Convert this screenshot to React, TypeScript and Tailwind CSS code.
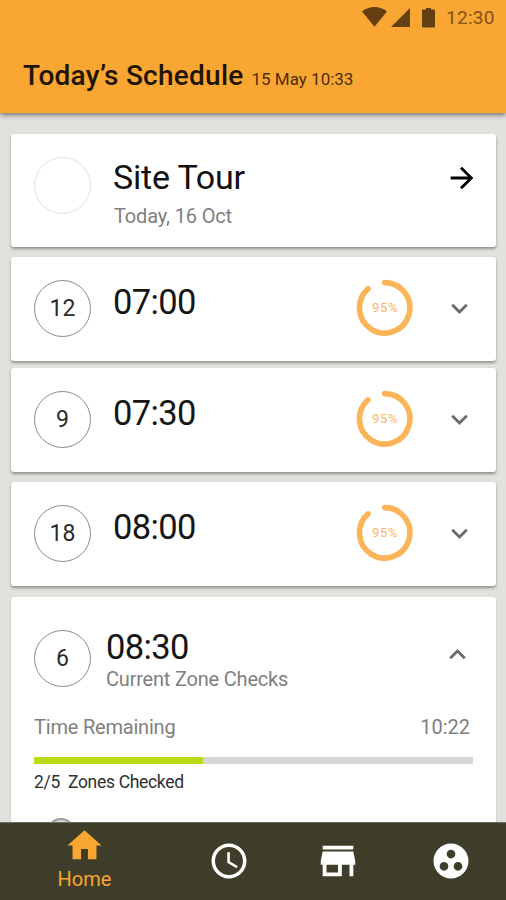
import React from "react";
import {
  MdAccessTime,
  MdArrowForward,
  MdExpandLess,
  MdExpandMore,
  MdGroupWork,
  MdHome,
  MdStore,
} from "react-icons/md";

function StatusBar() {
  return (
    <div className="flex h-[35px] items-start pl-[362px] pt-[7px] text-[#643f12]">
      <svg className="h-5 w-[25px] shrink-0" viewBox="0 0 25 20" fill="currentColor">
        <path d="M0 4.4C3.5 1.6 7.8 0 12.5 0S21.500 1.600 25 4.400L12.500 19.700z" />
      </svg>
      <svg className="ml-[4px] mt-[1px] h-[19px] w-[19px] shrink-0" viewBox="0 0 19 19" fill="currentColor">
        <path d="M0 19h19V0z" />
      </svg>
      <svg className="ml-[12px] mt-[0.5px] h-[20px] w-[13px] shrink-0" viewBox="0 0 13 20" fill="currentColor">
        <path d="M4 0h5v1.500h3.200q.8 0 .8.800V18.700q0 .8-.8.800H.8Q0 19.500 0 18.700V2.300Q0 1.500.8 1.500H4z" />
      </svg>
      <span className="ml-[11px] whitespace-nowrap text-[19px] leading-[22px] tracking-[0.3px] text-[#7f5219]">12:30</span>
    </div>
  );
}

function CountCircle({ count }: { count?: number }) {
  return (
    <div
      className={
        "flex h-[57px] w-[57px] shrink-0 items-center justify-center rounded-full border text-[23px] leading-none text-[#2b2b2b] " +
        (count === undefined ? "border-[#e2e2e2]" : "border-[#8c8c8c]")
      }
    >
      {count}
    </div>
  );
}

function ProgressRing() {
  return (
    <div className="relative -mt-px h-[57px] w-[57px] shrink-0">
      <svg className="h-[57px] w-[57px]" viewBox="0 0 57 57" fill="none" stroke="#fbb457" strokeWidth="5.6" strokeLinecap="round">
        <path d="M28.700 3.600A25.200 25.200 0 1 1 12 9.900" />
      </svg>
      <span className="absolute inset-0 flex items-center justify-center pl-px text-[13px] tracking-[0.7px] text-[#fbb662]">
        95%
      </span>
    </div>
  );
}

const cardClass = "ml-[11px] mr-[10px] flex rounded-[3px] bg-white pl-[23px] shadow-[0_2px_3px_rgba(0,0,0,0.36)]";

function SlotCard({ count, time, spacing }: { count: number; time: string; spacing: string }) {
  return (
    <div className={cardClass + " h-[104px] shrink-0 pt-[23px] " + spacing}>
      <CountCircle count={count} />
      <div className="ml-[22px] mt-[2px] flex-1 text-[34.500px] leading-10 tracking-[-0.6px] text-[#161616]">{time}</div>
      <ProgressRing />
      <MdExpandMore className="ml-[29.5px] mr-[20.5px] mt-[12px] h-[33px] w-[33px] shrink-0 text-[#6b6b6b]" />
    </div>
  );
}

export default function App() {
  return (
    <div className="flex h-[900px] w-[506px] flex-col overflow-hidden bg-[#e1e1de] font-['Roboto','Liberation_Sans',sans-serif]">
      <header className="z-10 h-[113px] shrink-0 bg-[#faa632] shadow-[0_2px_5px_rgba(0,0,0,0.5)]">
        <StatusBar />
        <div className="flex items-baseline whitespace-nowrap pl-[23px] pt-[23px]">
          <h1 className="text-[28px] font-medium leading-[36px] tracking-[0.25px] text-[#1f1403]">Today’s Schedule</h1>
          <span className="ml-[8px] text-[17px] text-[#4a2f0a]">15 May 10:33</span>
        </div>
      </header>

      <main className="flex min-h-0 flex-1 flex-col overflow-hidden pt-[21px]">
        <div className={cardClass + " h-[113px] shrink-0 pt-[23px]"}>
          <CountCircle />
          <div className="ml-[22px] flex-1">
            <div className="text-[34px] leading-10 tracking-[-0.2px] text-[#111]">Site Tour</div>
            <div className="ml-px mt-[7px] text-[20px] leading-6 tracking-[-0.150px] text-[#808080]">Today, 16 Oct</div>
          </div>
          <MdArrowForward className="mr-[17px] mt-[4px] h-[34px] w-[34px] shrink-0 text-black" />
        </div>
        <SlotCard count={12} time="07:00" spacing="mt-[10px]" />
        <SlotCard count={9} time="07:30" spacing="mt-[7px]" />
        <SlotCard count={18} time="08:00" spacing="mt-[10px]" />

        <section className="ml-[11px] mr-[10px] mt-[11px] h-[300px] shrink-0 rounded-[3px] bg-white px-[23px] pt-[33px] shadow-[0_1px_2px_rgba(0,0,0,0.2)]">
          <div className="flex">
            <CountCircle count={6} />
            <div className="ml-[15px] flex-1">
              <div className="-mt-[3px] text-[34.500px] leading-10 tracking-[-0.6px] text-[#161616]">08:30</div>
              <div className="text-[20px] leading-6 tracking-[-0.2px] text-[#808080]">Current Zone Checks</div>
            </div>
            <MdExpandLess className="-mr-px mt-[8px] h-[33px] w-[33px] shrink-0 text-[#6b6b6b]" />
          </div>
          <div className="mt-[24px] flex justify-between pr-[3px] text-[20px] leading-6 text-[#808080]">
            <span className="tracking-[-0.2px]">Time Remaining</span>
            <span>10:22</span>
          </div>
          <div className="mt-[18px] h-[7px] bg-[#d6d6d6]">
            <div className="h-full w-[169px] bg-[#b9da14]" />
          </div>
          <div className="mt-[7px] whitespace-pre text-[17.500px] leading-[22px] tracking-[-0.32px] text-[#303030]">2/5  Zones Checked</div>
          <div className="ml-[13px] mt-[25px] h-[28px] w-[28px] rounded-full border-2 border-[#9c9c9c] bg-[#d6d6d6]" />
        </section>
      </main>

      <nav className="z-10 flex h-[78px] shrink-0 border-t border-[#6e6e60] bg-[#3e3d29] text-white">
        <div className="flex w-[169px] flex-col items-center pt-[2px] text-[#faa632]">
          <MdHome className="h-[41px] w-[41px] shrink-0" />
          <span className="mt-px text-[20px] leading-6">Home</span>
        </div>
        <div className="flex w-[119px] items-center justify-center pb-[2px]">
          <MdAccessTime className="h-[42px] w-[42px]" />
        </div>
        <div className="flex w-[100px] items-center justify-center pb-[2px]">
          <MdStore className="h-[46px] w-[46px]" />
        </div>
        <div className="flex flex-1 items-center justify-center pb-[2px] pl-[7px]">
          <MdGroupWork className="h-[42px] w-[42px]" />
        </div>
      </nav>
    </div>
  );
}
